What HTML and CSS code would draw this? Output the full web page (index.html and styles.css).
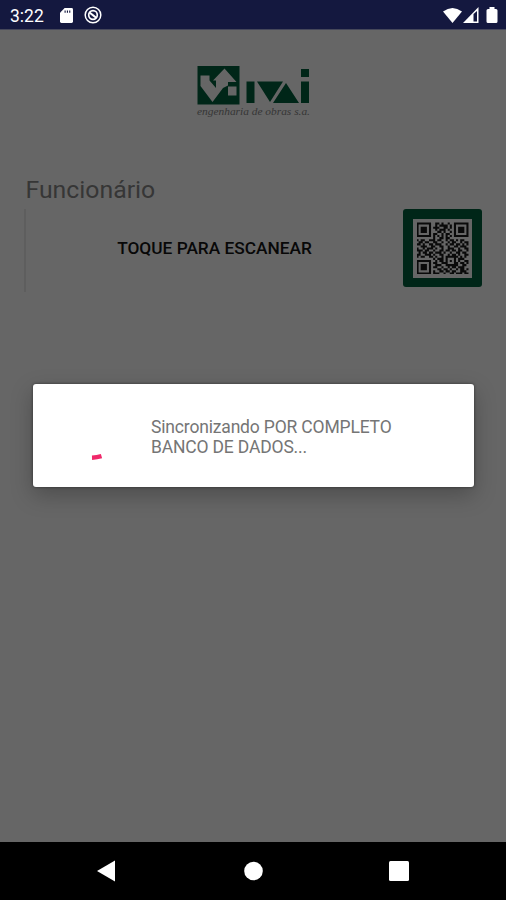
FILE: index.html
```html
<!DOCTYPE html>
<html lang="pt-BR">
<head>
  <meta charset="UTF-8">
  <meta name="viewport" content="width=device-width, initial-scale=1.0">
  <title>Ivaí</title>
  <link rel="stylesheet" href="styles.css">
</head>
<body>
  <header class="status-bar">
    <span class="clock">3:22</span>
    <svg class="sd" width="13" height="15" viewBox="0 0 14 16">
      <path d="M5 0H12.500Q14 0 14 1.500V14.500Q14 16 12.500 16H1.500Q0 16 0 14.500V5Z" fill="#fff"/>
      <path d="M5.500 2.500V5M8 2.500V5M10.500 2.500V5" stroke="#14183f" stroke-width="1.200"/>
    </svg>
    <svg class="sync" width="18" height="18" viewBox="0 0 18 18" fill="none" stroke="#fff">
      <circle cx="9" cy="9" r="7.800" stroke-width="1.500"/>
      <circle cx="9" cy="9" r="4.300" stroke-width="1.700"/>
      <path d="M5.500 6.500L12.500 12" stroke-width="2.200"/>
    </svg>
    <svg class="signals" width="56" height="18" viewBox="0 0 56 18" fill="#fff">
      <path d="M0 4.500Q9.500 -2.500 19 4.500L9.500 16Z"/>
      <path d="M35.500 0V16H20Z"/>
      <path d="M30.500 7V14.500H34V4Z" fill="#14183f"/>
      <path d="M46.500 0H51.500V2H53Q54.500 2 54.500 3.500V14.500Q54.500 16 53 16H45Q43.500 16 43.500 14.500V3.500Q43.500 2 45 2H46.500Z"/>
    </svg>
  </header>
  <main>
    <div class="logo">
      <svg width="114" height="39" viewBox="0 0 114 39">
        <path class="green" d="M.500 0H42.500V38.500H.500Z"/>
        <path class="cut" d="M3.500 9.500H12.500V20H3.500Z"/>
        <path class="cut" d="M3.500 20L12.500 14.500L19 22V14.500H16L27.500 2.500L39.500 16H31V19.500L26 22L15.500 36Z"/>
        <path class="cut" d="M31 20.500H39.500V29.500H31Z"/>
        <path class="green" d="M49.500 15.500H57.500V37H49.500ZM60 15.500H86L73 36ZM89 17L102 37H76ZM104 15.500H112V37H104ZM104 3H112V11H104Z"/>
      </svg>
      <span class="slogan">engenharia de obras s.a.</span>
    </div>
    <div class="label">Funcionário</div>
    <div class="scan">
      <span class="scan-text">TOQUE PARA ESCANEAR</span>
      <div class="qr-button">
        <svg id="qr" viewBox="0 0 25 25"></svg>
      </div>
    </div>
  </main>
  <nav>
    <svg width="20" height="22" viewBox="0 0 20 22"><path d="M19 .500V21.500L1 11Z" fill="#fff"/></svg>
    <svg width="20" height="20" viewBox="0 0 20 20"><circle cx="10.500" cy="10" r="9.300" fill="#fff"/></svg>
    <svg width="20" height="20" viewBox="0 0 20 20"><rect width="20" height="20" rx="1.500" fill="#fff"/></svg>
  </nav>
  <div class="overlay">
    <div class="dialog">
      <svg class="spinner" width="12" height="8" viewBox="0 0 12 8">
        <path d="M1 4.700Q6 4.500 10.500 3.200" fill="none" stroke="#f0286a" stroke-width="4.500"/>
      </svg>
      <p>Sincronizando POR COMPLETO<br>BANCO DE DADOS...</p>
    </div>
  </div>
  <script src="qr.js"></script>
</body>
</html>
```
FILE: styles.css
```css
* {
  margin: 0;
  padding: 0;
  box-sizing: border-box;
}
body {
  display: flex;
  flex-direction: column;
  height: 100vh;
  overflow: hidden;
  font-family: Roboto, "Liberation Sans", sans-serif;
  background-color: #666;
}
svg {
  display: block;
  flex-shrink: 0;
}
.status-bar {
  display: flex;
  height: 30px;
  padding-left: 10px;
  color: white;
  background-color: #14183f;
  border-bottom: 1px solid #45475a;
}
.clock {
  width: 50px;
  font-size: 17.5px;
  line-height: 32px;
}
.sd {
  margin-top: 8px;
}
.sync {
  margin: 6px 0 0 11px;
}
.signals {
  margin: 7px 7px 0 auto;
}
main {
  flex: 1;
  padding: 36px 24px 0;
}
.logo {
  width: 114px;
  margin: 0 auto 0 173px;
}
.green {
  fill: #002618;
}
.cut {
  fill: #666;
}
.slogan {
  display: block;
  font-family: "Liberation Serif", serif;
  font-style: italic;
  font-size: 11.4px;
  line-height: 12px;
  white-space: nowrap;
  color: #353535;
}
.label {
  margin: 56px 0 0 1.5px;
  font-size: 24.8px;
  line-height: 34px;
  color: #363636;
}
.scan {
  display: flex;
  height: 83px;
  margin-top: 2px;
  border-left: 2px solid #5e5e5e;
}
.scan-text {
  flex: 1;
  font-size: 17.3px;
  font-weight: 500;
  line-height: 78px;
  text-align: center;
  color: #080808;
}
.qr-button {
  width: 79px;
  height: 78px;
  padding: 9.5px 10px;
  border-radius: 3px;
  background-color: #002618;
}
#qr {
  width: 59px;
  height: 59px;
  padding: 3.5px;
  background-color: #666;
}
nav {
  display: flex;
  align-items: center;
  justify-content: space-between;
  height: 58px;
  padding: 0 97px 0 96px;
  background-color: black;
}
.overlay {
  position: absolute;
  top: 384px;
  left: 33px;
  right: 32px;
}
.dialog {
  display: flex;
  height: 103px;
  border-radius: 3px;
  background-color: white;
  box-shadow: 0 8px 22px rgba(0, 0, 0, 0.25), 0 0 3px rgba(0, 0, 0, 0.5);
}
.spinner {
  margin: 69px 0 0 58px;
}
.dialog p {
  margin: 33px 0 0 48px;
  font-size: 17.5px;
  letter-spacing: -0.17px;
  line-height: 20px;
  color: #757575;
}
```
FILE: qr.js
```js
const rows = [
  "1111111001101001001111111",
  "1000001001011110101000001",
  "1011101011100110101011101",
  "1011101001011101001011101",
  "1011101000110100101011101",
  "1000001011001011001000001",
  "1111111010101010101111111",
  "0000000010011011000000000",
  "1011001110110010110101100",
  "0110110011001001011001011",
  "1101001101110010110110101",
  "0011100110011001001101110",
  "1001011101001001110010011",
  "1110110010011011011011001",
  "0101101101110100100110110",
  "1100111010011001011010011",
  "1011001101001011111101010",
  "0000000010111010001011100",
  "1111111001011010101010011",
  "1000001011001110001101101",
  "1011101001110011111100110",
  "1011101011001001011011100",
  "1011101000110110100101101",
  "1000001010011011011001110",
  "1111111011100100110111011"
];
let d = "";
rows.forEach((row, y) => {
  for (let x = 0; x < row.length; x++) {
    if (row[x] == "1") {
      d += `M${x} ${y}h1v1h-1z`;
    }
  }
});
document.querySelector("#qr").innerHTML = `<path d="${d}" fill="#0a0a0a"/>`;
```
